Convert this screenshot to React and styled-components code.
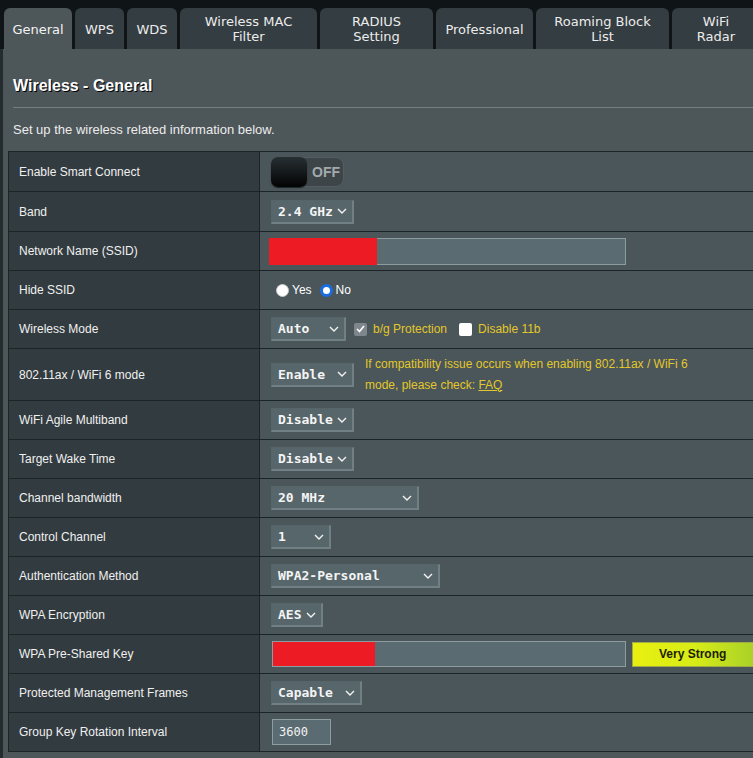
import styled, { createGlobalStyle } from 'styled-components'

const GlobalStyle = createGlobalStyle`
  html, body {
    margin: 0;
    padding: 0;
    background: #0f1517;
    overflow: hidden;
  }
  body {
    font-family: "Liberation Sans", Arial, sans-serif;
  }
`

const Page = styled.div`
  width: 753px;
  height: 758px;
  padding-top: 8px;
  box-sizing: border-box;
  overflow: hidden;
  background: #0f1517;
`

const TabBar = styled.div`
  display: flex;
  gap: 3px;
  padding-left: 4px;
  height: 41px;
`

const Tab = styled.div`
  flex: 0 0 auto;
  width: ${p => p.$w}px;
  height: 41px;
  padding-top: 1px;
  box-sizing: border-box;
  border-radius: 6px 6px 0 0;
  background: ${p => (p.$active ? '#4d5659' : '#343d41')};
  color: ${p => (p.$active ? '#f2f2f2' : '#ececec')};
  font-family: "DejaVu Sans", Verdana, sans-serif;
  font-size: 13px;
  line-height: 15px;
  display: flex;
  align-items: center;
  justify-content: center;
  text-align: center;
`

const Panel = styled.div`
  margin-left: 3px;
  height: 709px;
  background: #4d5659;
  box-shadow: -3px 0 0 #252c2f;
`

const Title = styled.h1`
  margin: 0;
  padding: 27px 0 0 10px;
  font-size: 16px;
  line-height: 20px;
  font-weight: bold;
  color: #ffffff;
  text-shadow: 1px 1px 0 #000;
`

const Divider = styled.div`
  height: 1px;
  margin: 11px 0 0 10px;
  background: #737e81;
`

const Description = styled.p`
  margin: 14px 0 0 10px;
  font-size: 13px;
  line-height: 16px;
  color: #ececec;
`

const Table = styled.div`
  margin: 13px 0 0 5px;
  border-top: 1px solid #1d2427;
  border-left: 1px solid #1d2427;
`

const Row = styled.div`
  display: grid;
  grid-template-columns: 251px 1fr;
  min-height: ${p => p.$h || 38}px;
  border-bottom: 1px solid #1d2427;
`

const Label = styled.div`
  display: flex;
  align-items: center;
  padding-left: 10px;
  background: #323b3f;
  border-right: 1px solid #1d2427;
  font-size: 12px;
  color: #f0f0f0;
`

const Value = styled.div`
  display: flex;
  align-items: center;
  gap: ${p => p.$gap ?? 0}px;
  padding-left: ${p => p.$pl ?? 11}px;
  background: #4a565a;
  font-size: 12px;
  color: #ffffff;
`

const SelectBox = styled.div`
  box-sizing: border-box;
  width: ${p => p.$w}px;
  height: 24px;
  display: flex;
  align-items: center;
  justify-content: space-between;
  padding: 0 5px 0 6px;
  background: #57666b;
  border-top: 1px solid #56656a;
  border-left: 1px solid #56656a;
  border-right: 2px solid #708084;
  border-bottom: 2px solid #708084;
  font-family: "DejaVu Sans Mono", "Liberation Mono", monospace;
  font-size: 13px;
  font-weight: 600;
  color: #f4f4f4;
  flex: 0 0 auto;
`

const TextField = styled.div`
  box-sizing: border-box;
  position: relative;
  width: ${p => p.$w}px;
  height: ${p => p.$h || 26}px;
  margin-left: ${p => p.$ml || 0}px;
  background: #5a6b71;
  border: 1px solid #8d9ca0;
  display: flex;
  align-items: center;
  padding-left: 6px;
  font-family: "DejaVu Sans Mono", "Liberation Mono", monospace;
  font-size: 12px;
  color: #f4f4f4;
  flex: 0 0 auto;
`

const Redaction = styled.div`
  position: absolute;
  left: ${p => p.$inset}px;
  top: ${p => p.$inset}px;
  bottom: ${p => p.$inset}px;
  width: ${p => p.$w}px;
  background: #ed1c24;
`

const Toggle = styled.div`
  position: relative;
  box-sizing: border-box;
  width: 73px;
  height: 30px;
  border-radius: 8px;
  background: #3d4548;
  border: 1px solid #545e62;
  display: flex;
  align-items: center;
  justify-content: flex-end;
  padding-right: 3px;
  font-size: 14px;
  font-weight: bold;
  color: #a3aaad;
`

const Knob = styled.div`
  position: absolute;
  left: -1px;
  top: -1px;
  width: 36px;
  height: 30px;
  border-radius: 7px;
  background: linear-gradient(#283033, #020303);
  box-shadow: 0 1px 1px rgba(0, 0, 0, 0.6);
`

const Choice = styled.label`
  display: flex;
  align-items: center;
  gap: 3px;
  margin-right: ${p => p.$mr || 0}px;
  color: ${p => p.$color || '#ffffff'};
  font-size: 12px;
`

const Radio = styled.span`
  box-sizing: border-box;
  width: 13px;
  height: 13px;
  border-radius: 50%;
  background: #ffffff;
  border: ${p => (p.$on ? '3px solid #1a6de0' : '1px solid #c9c9c9')};
`

const Check = styled.span`
  box-sizing: border-box;
  width: 13px;
  height: 13px;
  border-radius: 2px;
  background: ${p => (p.$on ? '#7e878b' : '#ffffff')};
  display: flex;
  align-items: center;
  justify-content: center;
  margin-right: 3px;
`

const Hint = styled.div`
  margin-left: 11px;
  font-size: 12px;
  line-height: 21px;
  color: #e3c72a;

  a {
    color: #e3c72a;
    text-decoration: underline;
  }
`

const Strength = styled.div`
  box-sizing: border-box;
  flex: 0 0 auto;
  width: 140px;
  height: 25px;
  margin-left: 6px;
  border: 1px solid #a0aa47;
  background: linear-gradient(90deg, #e8f010 0%, #d7ec18 45%, #9cc92c 100%);
  display: flex;
  align-items: center;
  padding-left: 26px;
  font-size: 12px;
  font-weight: bold;
  color: #1c2100;
`

function Chevron() {
  return (
    <svg width="10" height="6" viewBox="0 0 10 6">
      <polyline points="1,1 5,5 9,1" fill="none" stroke="#f2f2f2" strokeWidth="1.4" />
    </svg>
  )
}

function Select({ w, children }) {
  return (
    <SelectBox $w={w}>
      <span>{children}</span>
      <Chevron />
    </SelectBox>
  )
}

const tabs = [
  { label: 'General', w: 68, active: true },
  { label: 'WPS', w: 49 },
  { label: 'WDS', w: 50 },
  { label: 'Wireless MAC Filter', w: 137, br: true },
  { label: 'RADIUS Setting', w: 113, br: true },
  { label: 'Professional', w: 97 },
  { label: 'Roaming Block List', w: 133, br: true },
  { label: 'WiFi Radar', w: 88, br: true },
]

function TabLabel({ label, br }) {
  if (!br) return label
  const i = label.lastIndexOf(' ')
  return (
    <>
      {label.slice(0, i)}
      <br />
      {label.slice(i + 1)}
    </>
  )
}

export default function App() {
  return (
    <Page>
      <GlobalStyle />
      <TabBar>
        {tabs.map(t => (
          <Tab key={t.label} $w={t.w} $active={t.active}>
            <span><TabLabel label={t.label} br={t.br} /></span>
          </Tab>
        ))}
      </TabBar>
      <Panel>
        <Title>Wireless - General</Title>
        <Divider />
        <Description>Set up the wireless related information below.</Description>
        <Table>
          <Row $h={39}>
            <Label>Enable Smart Connect</Label>
            <Value>
              <Toggle>
                <Knob />
                OFF
              </Toggle>
            </Value>
          </Row>
          <Row $h={39}>
            <Label>Band</Label>
            <Value><Select w={83}>2.4 GHz</Select></Value>
          </Row>
          <Row>
            <Label>Network Name (SSID)</Label>
            <Value>
              <TextField $w={357} $h={27} $ml={-2}>
                <Redaction $inset={-1} $w={108} />
              </TextField>
            </Value>
          </Row>
          <Row>
            <Label>Hide SSID</Label>
            <Value $pl={16}>
              <Choice $mr={8}><Radio />Yes</Choice>
              <Choice><Radio $on />No</Choice>
            </Value>
          </Row>
          <Row>
            <Label>Wireless Mode</Label>
            <Value $gap={8}>
              <Select w={75}>Auto</Select>
              <Choice $color="#e3c72a" $mr={4}>
                <Check $on>
                  <svg width="9" height="8" viewBox="0 0 9 8">
                    <polyline points="1,4 3.5,6.5 8,1" fill="none" stroke="#ffffff" strokeWidth="1.6" />
                  </svg>
                </Check>
                b/g Protection
              </Choice>
              <Choice $color="#e3c72a">
                <Check />
                Disable 11b
              </Choice>
            </Value>
          </Row>
          <Row $h={51}>
            <Label>802.11ax / WiFi 6 mode</Label>
            <Value>
              <Select w={83}>Enable</Select>
              <Hint>
                If compatibility issue occurs when enabling 802.11ax / WiFi 6
                <br />
                mode, please check: <a>FAQ</a>
              </Hint>
            </Value>
          </Row>
          <Row>
            <Label>WiFi Agile Multiband</Label>
            <Value><Select w={83}>Disable</Select></Value>
          </Row>
          <Row>
            <Label>Target Wake Time</Label>
            <Value><Select w={83}>Disable</Select></Value>
          </Row>
          <Row>
            <Label>Channel bandwidth</Label>
            <Value><Select w={148}>20 MHz</Select></Value>
          </Row>
          <Row>
            <Label>Control Channel</Label>
            <Value><Select w={60}>1</Select></Value>
          </Row>
          <Row>
            <Label>Authentication Method</Label>
            <Value><Select w={169}>WPA2-Personal</Select></Value>
          </Row>
          <Row>
            <Label>WPA Encryption</Label>
            <Value><Select w={52}>AES</Select></Value>
          </Row>
          <Row>
            <Label>WPA Pre-Shared Key</Label>
            <Value>
              <TextField $w={354} $ml={1}>
                <Redaction $inset={0} $w={102} />
              </TextField>
              <Strength>Very Strong</Strength>
            </Value>
          </Row>
          <Row>
            <Label>Protected Management Frames</Label>
            <Value><Select w={91}>Capable</Select></Value>
          </Row>
          <Row>
            <Label>Group Key Rotation Interval</Label>
            <Value>
              <TextField $w={59} $ml={1}>3600</TextField>
            </Value>
          </Row>
        </Table>
      </Panel>
    </Page>
  )
}
